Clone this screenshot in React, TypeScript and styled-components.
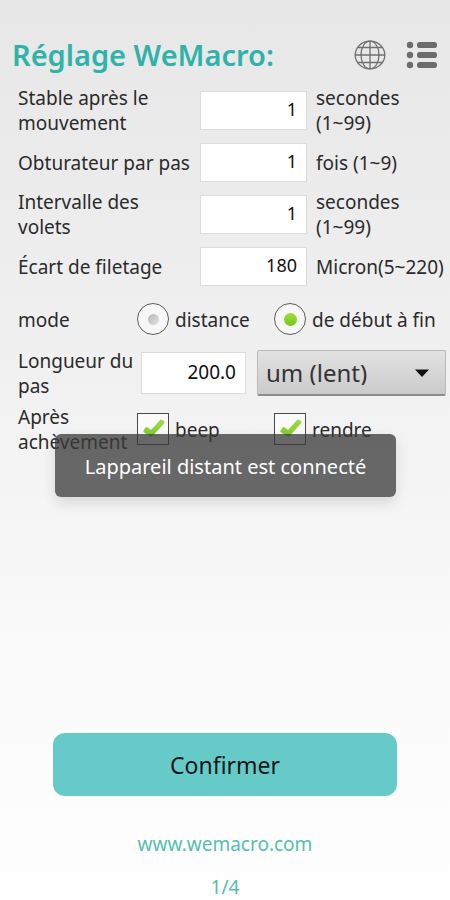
import React from "react";
import styled, { createGlobalStyle } from "styled-components";

const GlobalStyle = createGlobalStyle`
  *, *::before, *::after { box-sizing: border-box; }
  body {
    margin: 0;
    font-family: "Noto Sans", sans-serif;
    font-size: 19px;
    line-height: 25px;
    color: #2b2b2b;
    background: #fdfdfd;
  }
  input, select, button { font: inherit; color: inherit; margin: 0; }
`;

const Page = styled.main`
  position: relative;
  display: flex;
  flex-direction: column;
  min-height: 100vh;
  background: linear-gradient(#e7e7e7 0%, #ebebeb 18%, #f1f1f1 42%, #fbfbfb 76%, #fefefe 100%);
`;

const Header = styled.header`
  display: flex;
  align-items: center;
  gap: 20px;
  height: 84px;
  padding: 26px 12px 0 12px;
`;

const Title = styled.h1`
  flex: 1;
  margin: 0;
  font-size: 29px;
  line-height: 40px;
  font-weight: 600;
  color: #2fb3a9;
  white-space: nowrap;
`;

const IconButton = styled.button`
  display: flex;
  padding: 0;
  border: 0;
  background: none;
  cursor: pointer;
`;

const Form = styled.form`
  flex: 1;
  display: flex;
  flex-direction: column;
`;

const Row = styled.div<{ $columns: string; $height?: number }>`
  display: grid;
  grid-template-columns: ${(p) => p.$columns};
  align-items: center;
  min-height: ${(p) => p.$height ?? 52}px;
  padding: 0 4px 0 18px;
`;

const Label = styled.label`
  padding: 2px 6px 0 0;
`;

const Unit = styled.span`
  padding: 2px 0 0 9px;
`;

const NumberField = styled.input<{ $tall?: boolean }>`
  width: 100%;
  height: ${(p) => (p.$tall ? 42 : 39)}px;
  padding: 0 9px 2px;
  border: 1px solid #dcdcdc;
  background: #fff;
  color: #111;
  font-size: ${(p) => (p.$tall ? 19 : 18)}px;
  text-align: right;
`;

const Choice = styled.label`
  display: flex;
  align-items: center;
  gap: 6px;
  white-space: nowrap;
`;

const ChoiceText = styled.span`
  padding-top: 2px;
`;

const Radio = styled.input`
  appearance: none;
  display: grid;
  place-items: center;
  width: 32px;
  height: 32px;
  border: 1px solid #5c5c5c;
  border-radius: 50%;
  background: #f7f7f7;

  &::before {
    content: "";
    width: 11px;
    height: 11px;
    border-radius: 50%;
    background: linear-gradient(135deg, #b5b5b5, #e4e4e4);
  }
  &:checked::before {
    width: 13px;
    height: 13px;
    background: linear-gradient(#9be03a, #74c71c);
  }
`;

const CheckSlot = styled.span`
  display: grid;
  width: 32px;
  height: 32px;

  & > * { grid-area: 1 / 1; }
`;

const CheckInput = styled.input`
  appearance: none;
  width: 32px;
  height: 32px;
  border: 1px solid #484848;
  background: #fafafa;

  & + svg { visibility: hidden; pointer-events: none; }
  &:checked + svg { visibility: visible; }
`;

const SelectSlot = styled.div`
  display: grid;
  align-items: center;

  & > * { grid-area: 1 / 1; }
  & > svg { justify-self: end; margin-right: 17px; pointer-events: none; }
`;

const UnitSelect = styled.select`
  appearance: none;
  width: 100%;
  height: 46px;
  padding: 0 40px 0 8px;
  border: 1px solid #b9b9b9;
  border-bottom: 2px solid #8d8d8d;
  border-radius: 2px;
  background: linear-gradient(#e2e2e2, #cbcbcb);
  font-size: 24px;
  color: #333;
`;

const Toast = styled.div`
  position: absolute;
  top: 434px;
  left: 55px;
  right: 54px;
  padding: 20px 8px 18px;
  border-radius: 6px;
  background: rgba(58, 58, 58, 0.76);
  box-shadow: 0 6px 14px rgba(0, 0, 0, 0.12);
  color: #fff;
  font-size: 20px;
  text-align: center;
  white-space: nowrap;
`;

const Confirm = styled.button`
  height: 63px;
  margin: auto 53px 0;
  padding: 2px 0 0;
  border: 0;
  border-radius: 12px;
  background: #66cbc8;
  font-size: 23px;
  color: #0c1616;
  cursor: pointer;
`;

const Footer = styled.footer`
  display: flex;
  flex-direction: column;
  align-items: center;
  gap: 18px;
  padding: 36px 0 0;
  height: 104px;
  color: #55bfae;
`;

const SiteLink = styled.a`
  color: inherit;
  text-decoration: none;
`;

const GlobeIcon = () => (
  <svg width="32" height="30" viewBox="0 0 32 30" fill="none" stroke="#707070" strokeWidth="1.3">
    <ellipse cx="16" cy="15" rx="14.8" ry="13.8" />
    <ellipse cx="16" cy="15" rx="9" ry="13.8" />
    <path d="M16 1V29M1 15H31M4 7.5H28M4 22.5H28" />
  </svg>
);

const ListIcon = () => (
  <svg width="32" height="28" viewBox="0 0 32 28" fill="#6c6c6c">
    {[4, 14, 24].map((y) => (
      <g key={y}>
        <circle cx="4" cy={y} r="3.2" />
        <rect x="11" y={y - 3} width="20" height="6" rx="2.8" />
      </g>
    ))}
  </svg>
);

const Tick = () => (
  <svg width="32" height="32" viewBox="0 0 32 32">
    <defs>
      <linearGradient id="tickFill" x1="0" y1="0" x2="0" y2="1">
        <stop offset="0" stopColor="#a2dc4c" />
        <stop offset="1" stopColor="#7ccb2a" />
      </linearGradient>
    </defs>
    <path
      fill="url(#tickFill)"
      d="M6.500 17.500L8.500 14.500Q9.500 13.500 11 14.500L14 17L22.500 7.500Q24 6 25.500 7L27 8Q28 9 27 10.500L16 22.500Q14 24.500 12 22.500L7 19.500Q6 18.500 6.500 17.500Z"
    />
  </svg>
);

const fields = [
  { id: "stable", label: "Stable après le mouvement", value: "1", unit: "secondes (1~99)" },
  { id: "shutter", label: "Obturateur par pas", value: "1", unit: "fois (1~9)" },
  { id: "interval", label: "Intervalle des volets", value: "1", unit: "secondes (1~99)" },
  { id: "pitch", label: "Écart de filetage", value: "180", unit: "Micron(5~220)" },
];

const Checkbox = ({ label }: { label: string }) => (
  <Choice>
    <CheckSlot>
      <CheckInput type="checkbox" defaultChecked />
      <Tick />
    </CheckSlot>
    <ChoiceText>{label}</ChoiceText>
  </Choice>
);

export default function App() {
  return (
    <>
      <GlobalStyle />
      <Page>
        <Header>
          <Title>Réglage WeMacro:</Title>
          <IconButton type="button" aria-label="Langue"><GlobeIcon /></IconButton>
          <IconButton type="button" aria-label="Menu"><ListIcon /></IconButton>
        </Header>
        <Form onSubmit={(e) => e.preventDefault()}>
          {fields.map((f) => (
            <Row key={f.id} $columns="minmax(0, 182fr) minmax(0, 107fr) minmax(0, 139fr)">
              <Label htmlFor={f.id}>{f.label}</Label>
              <NumberField id={f.id} inputMode="numeric" defaultValue={f.value} />
              <Unit>{f.unit}</Unit>
            </Row>
          ))}
          <Row $columns="119fr 137fr 172fr" $height={54} role="radiogroup" aria-labelledby="mode">
            <ChoiceText id="mode">mode</ChoiceText>
            <Choice>
              <Radio type="radio" name="mode" />
              <ChoiceText>distance</ChoiceText>
            </Choice>
            <Choice>
              <Radio type="radio" name="mode" defaultChecked />
              <ChoiceText>de début à fin</ChoiceText>
            </Choice>
          </Row>
          <Row $columns="123fr 105fr 11fr 189fr" $height={54}>
            <Label htmlFor="step">Longueur du pas</Label>
            <NumberField id="step" $tall inputMode="decimal" defaultValue="200.0" />
            <span />
            <SelectSlot>
              <UnitSelect aria-label="Unité du pas" defaultValue="slow">
                <option value="slow">um (lent)</option>
              </UnitSelect>
              <svg width="14" height="8" viewBox="0 0 14 8"><path d="M0 0.5H14L7 8Z" fill="#111" /></svg>
            </SelectSlot>
          </Row>
          <Row $columns="minmax(0, 119fr) 137fr 172fr" $height={58} role="group" aria-labelledby="after">
            <ChoiceText id="after">Après achèvement</ChoiceText>
            <Checkbox label="beep" />
            <Checkbox label="rendre" />
          </Row>
          <Confirm type="submit">Confirmer</Confirm>
        </Form>
        <Footer>
          <SiteLink href="http://www.wemacro.com">www.wemacro.com</SiteLink>
          <span>1/4</span>
        </Footer>
        <Toast role="status">Lappareil distant est connecté</Toast>
      </Page>
    </>
  );
}
